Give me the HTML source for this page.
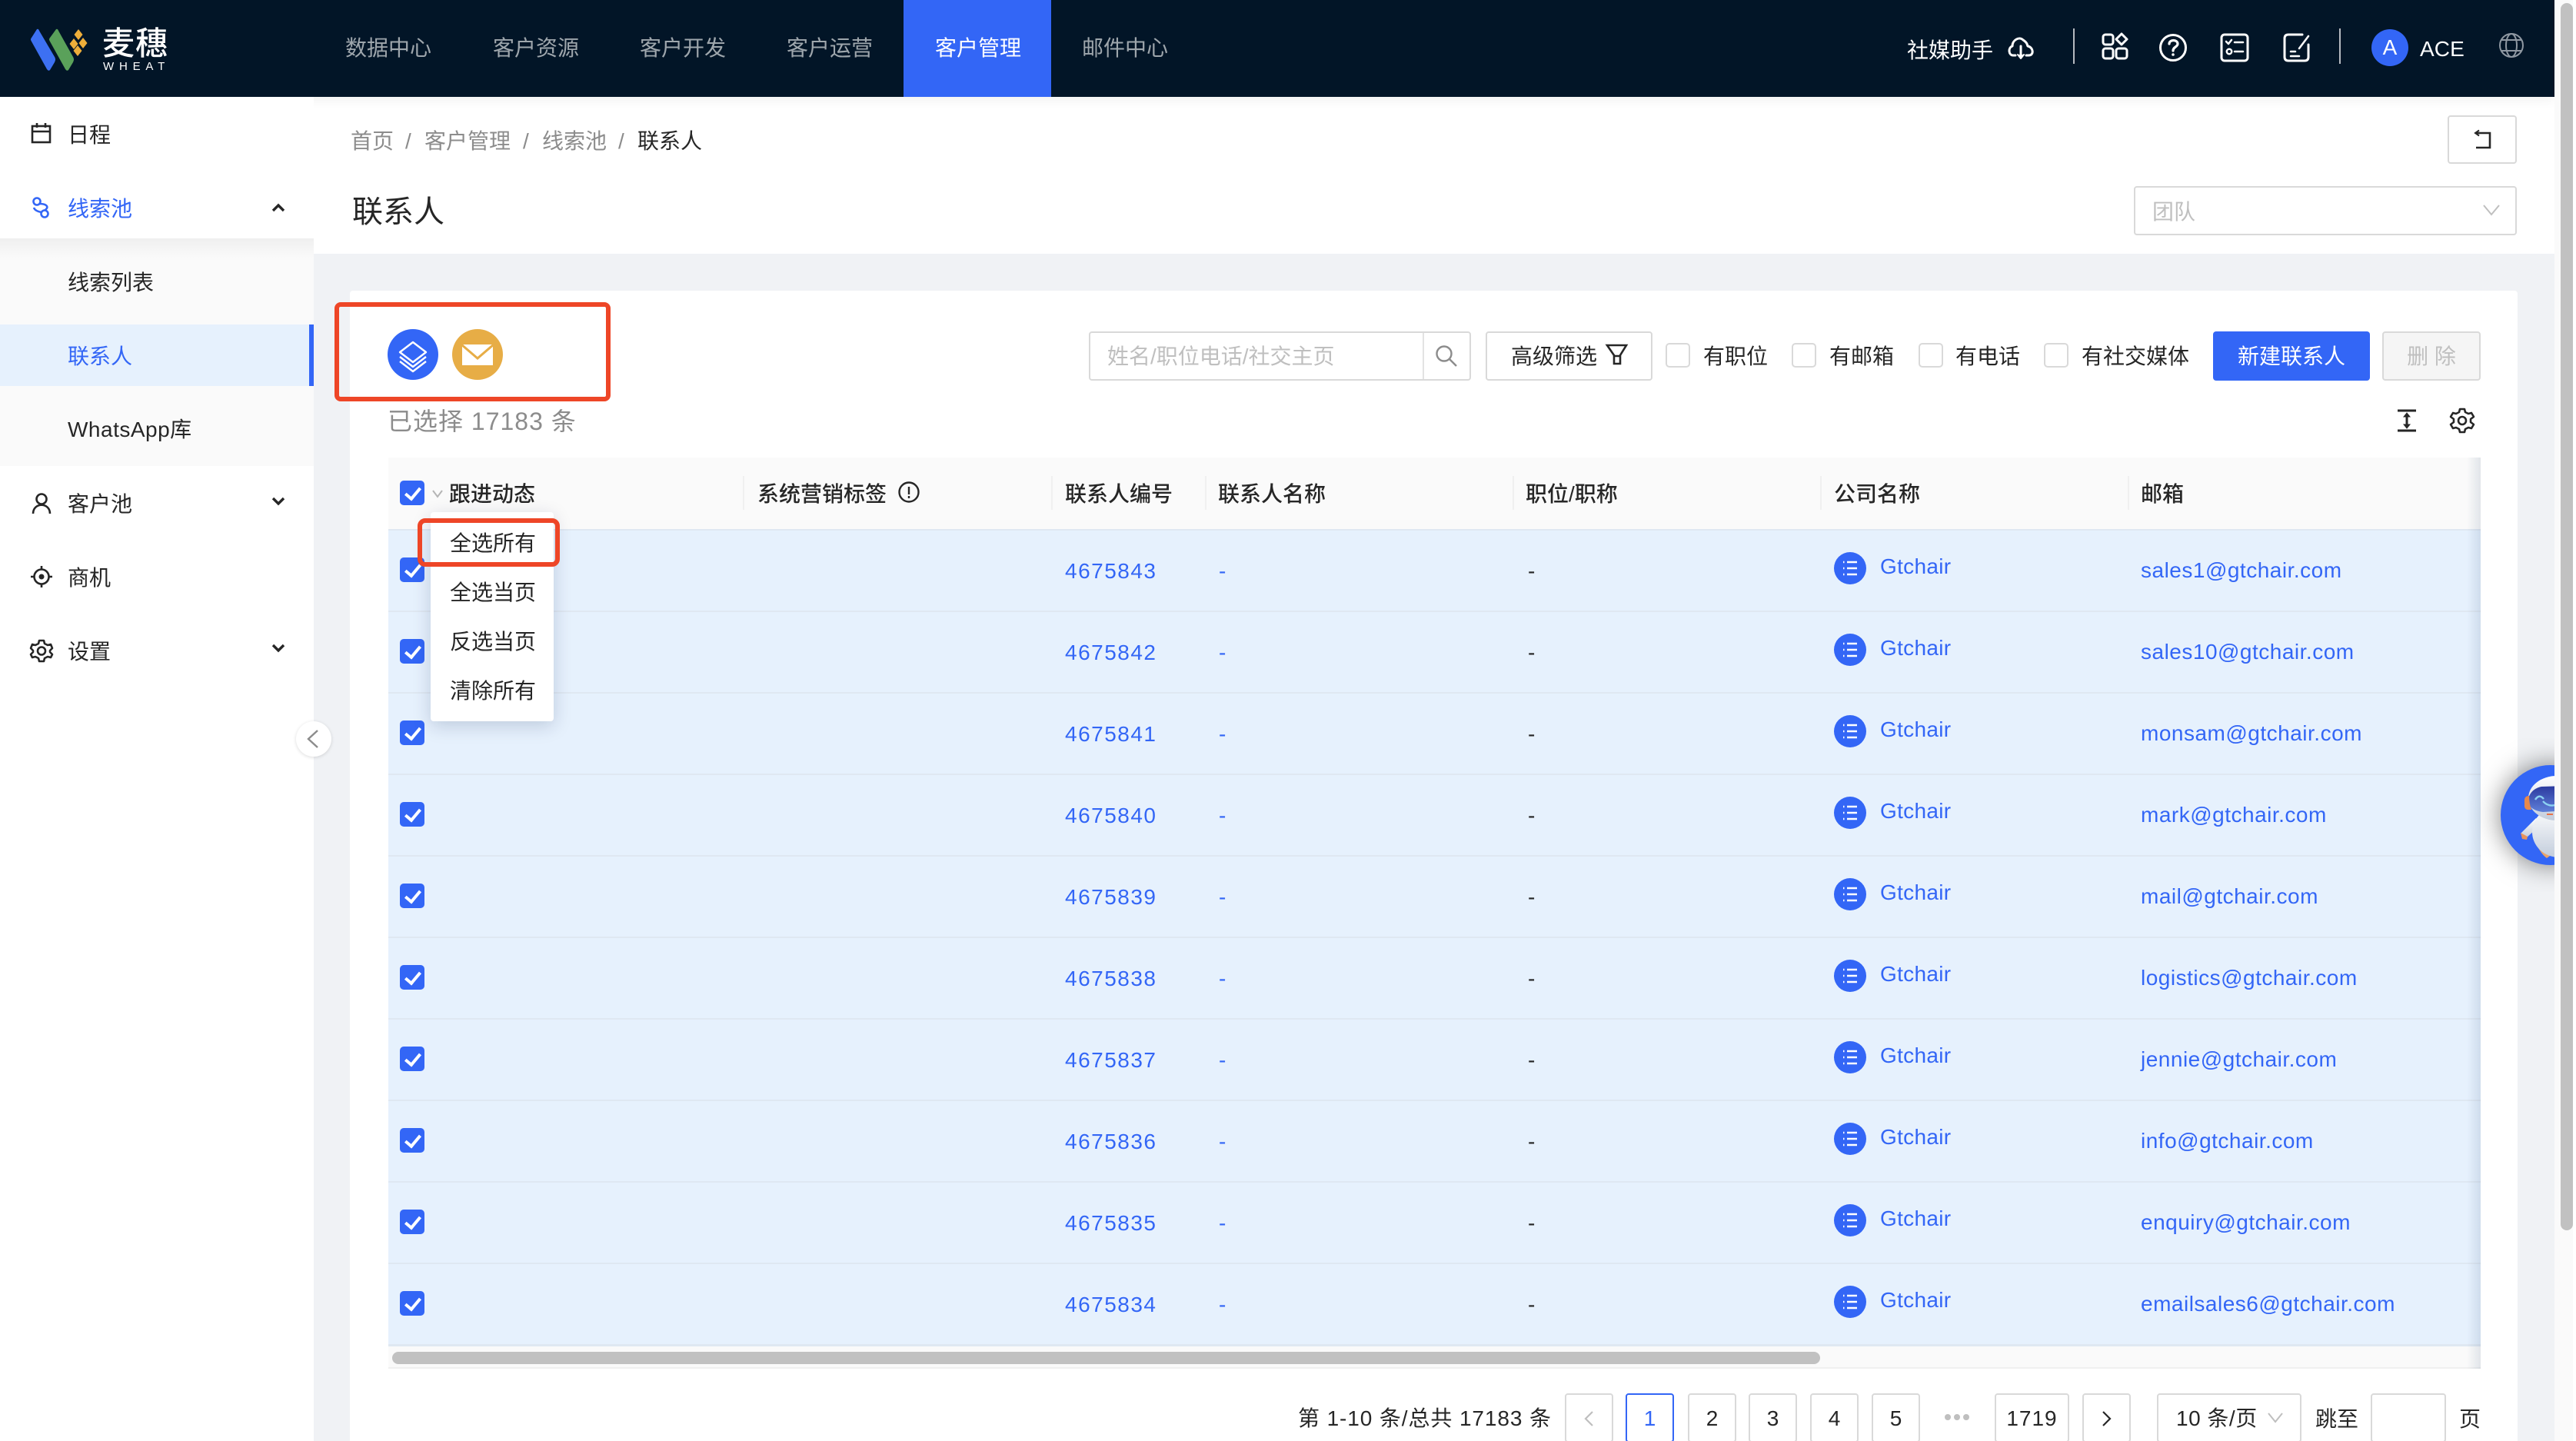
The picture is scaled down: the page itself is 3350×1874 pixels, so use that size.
<!DOCTYPE html>
<html lang="zh-CN"><head><meta charset="utf-8"><title>联系人</title>
<style>
html,body{margin:0;padding:0;width:3350px;height:1874px;overflow:hidden;background:#f0f2f5}
body{position:relative;font-family:"Liberation Sans","Noto Sans CJK SC",sans-serif;font-size:28px;color:#262626}
.a{position:absolute;box-sizing:border-box}
.t{position:absolute;white-space:nowrap;line-height:40px;height:40px;transform:translateY(2px)}
svg{position:absolute;overflow:visible}
.nav{color:rgba(255,255,255,.62);top:41px}
.g{color:#8c8c8c}
.b{color:#3366f6}
.cb{position:absolute;box-sizing:border-box;width:32px;height:32px;border-radius:5px;background:#3366f6}
.cb::after{content:"";position:absolute;left:11px;top:5px;width:8px;height:16px;border:solid #fff;border-width:0 4px 4px 0;transform:rotate(40deg)}
.ck{position:absolute;box-sizing:border-box;width:32px;height:32px;border-radius:5px;border:2px solid #d9d9d9;background:#fff;top:446px}
.th{top:621px;font-weight:500;color:#262626}
.sep{position:absolute;top:619px;width:2px;height:44px;background:#f0f0f0}
.row{position:absolute;left:505px;width:2721px;height:106px;background:linear-gradient(#dfe8f2 2px,#e6f1fd 2px);box-sizing:border-box}
.row .id{left:880px;top:33px;color:#3366f6;letter-spacing:1.5px}
.row .d1{left:1080px;top:33px;color:#3366f6}
.row .d2{left:1482px;top:33px;color:#262626}
.row .co{left:1940px;top:27px;color:#3366f6;letter-spacing:.3px}
.row .em{left:2279px;top:32px;color:#3366f6;letter-spacing:.5px}
.row .cb{left:15px;top:37px}
.row svg{left:1880px;top:30px}
.pg{position:absolute;box-sizing:border-box;top:1812px;height:64px;border:2px solid #d9d9d9;border-radius:4px;background:#fff;text-align:center;line-height:62px;font-size:28px}
.dd{left:585px}
</style></head><body>

<!-- top panel -->
<div class="a" style="left:408px;top:126px;width:2914px;height:204px;background:#fff"></div>
<!-- main card -->
<div class="a" style="left:455px;top:378px;width:2819px;height:1496px;background:#fff;border-radius:4px 4px 0 0"></div>

<!-- header -->
<div class="a" style="left:0;top:0;width:3322px;height:126px;background:#021527;box-shadow:0 4px 14px rgba(0,0,0,.06)"></div>
<svg style="left:0;top:0" width="240" height="126">
<path d="M48 38 Q50 37 51 40 L71 74 Q73 77 71 81 L65 91 Q63 93 61 90 L41 54 Q39 51 41 49Z" fill="#3d70f2"/>
<path d="M73 38 Q75 37 76 40 L95 74 Q97 77 95 81 L89 91 Q87 93 85 90 L65 54 Q63 51 65 49Z" fill="#5aa15a"/>
<path d="M102 38 L107.500 45 L102 52 L96.500 45Z M96 50 L101.500 57 L96 64 L90.500 57Z M108 49 L113.500 56 L108 63 L102.500 56Z M101 59 L106.500 66 L101 73 L95.500 66Z" fill="#eeae3a"/>
</svg>
<div class="t" style="left:133px;top:34px;font-size:42px;line-height:42px;height:42px;font-weight:500;color:#fff;letter-spacing:1px">麦穗</div>
<div class="t" style="left:134px;top:77px;font-size:15px;line-height:15px;height:15px;color:#fff;letter-spacing:6.8px">WHEAT</div>

<div class="t nav" style="left:449px">数据中心</div>
<div class="t nav" style="left:641px">客户资源</div>
<div class="t nav" style="left:832px">客户开发</div>
<div class="t nav" style="left:1023px">客户运营</div>
<div class="a" style="left:1175px;top:0;width:192px;height:126px;background:#3366f6"></div>
<div class="t nav" style="left:1216px;color:#fff">客户管理</div>
<div class="t nav" style="left:1407px">邮件中心</div>

<div class="t" style="left:2480px;top:44px;color:#fff">社媒助手</div>
<svg style="left:2600px;top:30px" width="420" height="60" fill="none" stroke="#fff" stroke-width="3" stroke-linecap="round" stroke-linejoin="round">
<path d="M21 42 H18 C12 42 11 32 17 30 C17 22 26 17 31 22 C37 26 36 28 37 30 C44 31 46 42 38 42 H35"/>
<path d="M28 30 V44"/><path d="M24 41 L28 46 L32 41" fill="#fff" stroke-width="2"/>
<rect x="135" y="15" width="13" height="13" rx="3"/><rect x="135" y="33" width="13" height="13" rx="3"/><rect x="152" y="33" width="14" height="13" rx="3"/>
<path d="M159 14 L166 21 L159 28 L152 21Z"/>
<circle cx="226" cy="32" r="16.5"/>
<path d="M221 27 C221 21 232 21 232 27 C232 31 226 31 226 36" stroke-width="3.2"/><circle cx="226" cy="41" r="1.3" fill="#fff" stroke-width="1"/>
<rect x="289" y="15" width="34" height="34" rx="4"/>
<path d="M295 24 L298 27 L302 22 M306 25 H317 M306 37 H317" stroke-width="2.5"/><circle cx="299" cy="37" r="3.2" stroke-width="2.5"/>
<path d="M394 15 H376 Q371 15 371 20 V44 Q371 49 376 49 H397 Q402 49 402 44 V28"/>
<path d="M402 17 L390 33 M379 37 H385 M379 43 H390" stroke-width="2.5"/>
</svg>
<div class="a" style="left:2696px;top:37px;width:2px;height:46px;background:#b5bac0"></div>
<div class="a" style="left:3042px;top:37px;width:2px;height:46px;background:#b5bac0"></div>
<div class="a" style="left:3084px;top:38px;width:48px;height:48px;border-radius:50%;background:#3366f6;color:#fff;text-align:center;line-height:48px;font-size:28px">A</div>
<div class="t" style="left:3147px;top:42px;color:#fff;letter-spacing:.1px">ACE</div>
<svg style="left:3249px;top:42px" width="34" height="34" fill="none" stroke="#8f98a2" stroke-width="2">
<circle cx="17" cy="17" r="15"/><ellipse cx="17" cy="17" rx="7" ry="15"/><path d="M4 10 H30 M4 24 H30"/>
</svg>

<!-- sidebar -->
<div class="a" style="left:0;top:126px;width:408px;height:1748px;background:#fff"></div>
<div class="a" style="left:0;top:310px;width:408px;height:296px;background:#fafafa"></div>
<div class="a" style="left:0;top:310px;width:408px;height:26px;background:linear-gradient(rgba(0,0,0,.045),rgba(0,0,0,0))"></div>
<div class="a" style="left:0;top:422px;width:408px;height:80px;background:#e6f1fd;border-right:6px solid #3366f6"></div>

<svg style="left:40px;top:158px" width="28" height="30" fill="none" stroke="#262626" stroke-width="2.6">
<rect x="2" y="6" width="23" height="21"/><path d="M2 13 H25 M8 2 V8 M19 2 V8"/>
</svg>
<div class="t" style="left:88px;top:154px">日程</div>
<svg style="left:40px;top:255px" width="28" height="30" fill="none" stroke="#3366f6" stroke-width="2.6">
<circle cx="8" cy="7" r="4.5"/><circle cx="18" cy="23" r="4.5"/><path d="M11 10 C22 10 24 15 18 18.5 M14 21 C8 20 5 18 4 15"/>
</svg>
<div class="t b" style="left:88px;top:250px">线索池</div>
<svg style="left:352px;top:263px" width="20" height="14" fill="none" stroke="#262626" stroke-width="3.4"><path d="M3 11 L10 4 L17 11"/></svg>
<div class="t" style="left:88px;top:346px">线索列表</div>
<div class="t b" style="left:88px;top:442px">联系人</div>
<div class="t" style="left:88px;top:537px;letter-spacing:.5px">WhatsApp库</div>
<svg style="left:40px;top:640px" width="28" height="30" fill="none" stroke="#262626" stroke-width="2.6">
<circle cx="14" cy="9" r="6.5"/><path d="M3 28 C3 13 25 13 25 28"/>
</svg>
<div class="t" style="left:88px;top:634px">客户池</div>
<svg style="left:352px;top:645px" width="20" height="14" fill="none" stroke="#262626" stroke-width="3.4"><path d="M3 3 L10 10 L17 3"/></svg>
<svg style="left:38px;top:736px" width="30" height="30" fill="none" stroke="#262626" stroke-width="2.6">
<circle cx="16" cy="14" r="9.5"/><circle cx="16" cy="14" r="3.5" fill="#262626" stroke="none"/><path d="M16 0 V5 M16 23 V28 M2 14 H7 M25 14 H30"/>
</svg>
<div class="t" style="left:88px;top:730px">商机</div>
<svg style="left:38px;top:830px" width="30" height="30" fill="none" stroke="#262626" stroke-width="2.6" stroke-linejoin="round">
<path d="M13 3 H19 L20 7 L24 9 L28 8 L30 13 L27 16 L27 18 L30 21 L28 25 L24 24 L20 26 L19 30 H13 L12 26 L8 24 L4 25 L2 21 L5 18 L5 16 L2 13 L4 8 L8 9 L12 7Z"/><circle cx="16" cy="16.500" r="5"/>
</svg>
<div class="t" style="left:88px;top:826px">设置</div>
<svg style="left:352px;top:836px" width="20" height="14" fill="none" stroke="#262626" stroke-width="3.4"><path d="M3 3 L10 10 L17 3"/></svg>

<div class="a" style="left:385px;top:938px;width:46px;height:46px;border-radius:50%;background:#fff;box-shadow:0 1px 5px rgba(0,0,0,.14)"></div>
<svg style="left:398px;top:949px" width="20" height="24" fill="none" stroke="#8c8c8c" stroke-width="2.4"><path d="M15 1 L3 12 L15 23"/></svg>

<!-- breadcrumb -->
<div class="t g" style="left:456px;top:162px">首页</div>
<div class="t" style="left:527px;top:162px;color:#8c8c8c">/</div>
<div class="t g" style="left:552px;top:162px">客户管理</div>
<div class="t" style="left:680px;top:162px;color:#8c8c8c">/</div>
<div class="t g" style="left:705px;top:162px">线索池</div>
<div class="t" style="left:804px;top:162px;color:#8c8c8c">/</div>
<div class="t" style="left:829px;top:162px">联系人</div>
<div class="t" style="left:458px;top:252px;font-size:40px;line-height:44px;height:44px">联系人</div>

<div class="a" style="left:3183px;top:150px;width:90px;height:63px;border:2px solid #d9d9d9;border-radius:4px;background:#fff"></div>
<svg style="left:3217px;top:168px" width="40" height="30" fill="none" stroke="#262626" stroke-width="2.6"><path d="M3 5 H21 V24 H3"/><path d="M7 1.500 L2 5 L7 8.500" stroke-width="2"/></svg>
<div class="a" style="left:2775px;top:242px;width:498px;height:64px;border:2px solid #d9d9d9;border-radius:4px;background:#fff"></div>
<div class="t" style="left:2799px;top:254px;color:#bfbfbf">团队</div>
<svg style="left:3228px;top:264px" width="24" height="20" fill="none" stroke="#bfbfbf" stroke-width="2"><path d="M2 3 L12 15 L22 3"/></svg>

<!-- red box -->
<div class="a" style="left:435px;top:393px;width:359px;height:129px;border:6px solid #ee4627;border-radius:8px"></div>
<div class="a" style="left:504px;top:428px;width:66px;height:66px;border-radius:50%;background:#3366f6"></div>
<svg style="left:504px;top:428px" width="66" height="66" fill="none" stroke="#fff" stroke-width="2.4" stroke-linejoin="round">
<path d="M33 17 L50 30 L33 43 L16 30Z"/><path d="M16 37 L33 50 L50 37 M16 43 L33 56 L50 43" transform="translate(0,-1)"/>
</svg>
<div class="a" style="left:588px;top:428px;width:66px;height:66px;border-radius:50%;background:#e7ad46"></div>
<svg style="left:588px;top:428px" width="66" height="66"><rect x="13" y="20" width="40" height="27" fill="#fff"/><path d="M12 20 L33 38 L54 20" fill="none" stroke="#e7ad46" stroke-width="3"/></svg>

<div class="t g" style="left:504px;top:526px;font-size:32px;letter-spacing:1px">已选择 17183 条</div>

<!-- toolbar -->
<div class="a" style="left:1416px;top:431px;width:497px;height:64px;border:2px solid #d9d9d9;border-radius:4px;background:#fff"></div>
<div class="a" style="left:1850px;top:433px;width:2px;height:60px;background:#e3e3e3"></div>
<div class="t" style="left:1440px;top:442px;color:#bfbfbf">姓名/职位电话/社交主页</div>
<svg style="left:1866px;top:448px" width="30" height="30" fill="none" stroke="#8c8c8c" stroke-width="2.4"><circle cx="12" cy="12" r="9.5"/><path d="M19 19 L28 28"/></svg>
<div class="a" style="left:1932px;top:431px;width:217px;height:64px;border:2px solid #d9d9d9;border-radius:4px;background:#fff"></div>
<div class="t" style="left:1965px;top:442px">高级筛选</div>
<svg style="left:2088px;top:447px" width="30" height="30" fill="none" stroke="#262626" stroke-width="2.6"><path d="M2 2 H27 L19 15 V26 H11 V15Z M11 16 H19"/></svg>
<div class="ck" style="left:2166px"></div><div class="t" style="left:2215px;top:442px">有职位</div>
<div class="ck" style="left:2330px"></div><div class="t" style="left:2379px;top:442px">有邮箱</div>
<div class="ck" style="left:2495px"></div><div class="t" style="left:2543px;top:442px">有电话</div>
<div class="ck" style="left:2658px"></div><div class="t" style="left:2707px;top:442px">有社交媒体</div>
<div class="a" style="left:2878px;top:431px;width:204px;height:64px;background:#3366f6;border-radius:4px;color:#fff;text-align:center;line-height:66px">新建联系人</div>
<div class="a" style="left:3098px;top:431px;width:128px;height:64px;background:#f5f5f5;border:2px solid #d9d9d9;border-radius:4px;color:#bfbfbf;text-align:center;line-height:62px">删 除</div>

<svg style="left:3117px;top:531px" width="26" height="32" fill="none" stroke="#262626" stroke-width="3"><path d="M1 3 H25 M1 29 H25 M13 8 V24"/><path d="M9 11 L13 6 L17 11 Z M9 21 L13 26 L17 21Z" fill="#262626" stroke-width="1"/></svg>
<svg style="left:3186px;top:531px" width="32" height="32" fill="none" stroke="#262626" stroke-width="2.6" stroke-linejoin="round">
<path d="M13 1 H19 L20 5 L24 7 L28 6 L31 11 L27 14 L27 18 L31 21 L28 26 L24 25 L20 27 L19 31 H13 L12 27 L8 25 L4 26 L1 21 L5 18 L5 14 L1 11 L4 6 L8 7 L12 5Z"/><circle cx="16" cy="16" r="5"/>
</svg>

<!-- table header -->
<div class="a" style="left:505px;top:595px;width:2721px;height:93px;background:#fafafa"></div>
<div class="cb" style="left:520px;top:625px"></div>
<svg style="left:561px;top:636px" width="16" height="12" fill="none" stroke="#b5b5b5" stroke-width="2"><path d="M2 2 L8 10 L14 2"/></svg>
<div class="t th" style="left:584px">跟进动态</div>
<div class="sep" style="left:966px"></div>
<div class="t th" style="left:985px">系统营销标签</div>
<svg style="left:1168px;top:626px" width="30" height="30" fill="none" stroke="#262626" stroke-width="2.4"><circle cx="14" cy="14" r="12.5"/><path d="M14 7 V17 M14 19 V22"/></svg>
<div class="sep" style="left:1367px"></div>
<div class="t th" style="left:1385px">联系人编号</div>
<div class="sep" style="left:1567px"></div>
<div class="t th" style="left:1584px">联系人名称</div>
<div class="sep" style="left:1967px"></div>
<div class="t th" style="left:1984px">职位/职称</div>
<div class="sep" style="left:2367px"></div>
<div class="t th" style="left:2385px">公司名称</div>
<div class="sep" style="left:2767px"></div>
<div class="t th" style="left:2784px">邮箱</div>

<!-- rows -->
<div class="row" style="top:688px"><div class="cb"></div><div class="t id">4675843</div><div class="t d1">-</div><div class="t d2">-</div>
<svg width="42" height="42"><circle cx="21" cy="21" r="21" fill="#3366f6"/><path d="M17 13 H30 M17 21 H30 M17 29 H30 M12 13 H13.500 M12 21 H13.500 M12 29 H13.500" stroke="#fff" stroke-width="2.600" fill="none"/></svg><div class="t co">Gtchair</div><div class="t em">sales1@gtchair.com</div></div>
<div class="row" style="top:794px"><div class="cb"></div><div class="t id">4675842</div><div class="t d1">-</div><div class="t d2">-</div>
<svg width="42" height="42"><circle cx="21" cy="21" r="21" fill="#3366f6"/><path d="M17 13 H30 M17 21 H30 M17 29 H30 M12 13 H13.500 M12 21 H13.500 M12 29 H13.500" stroke="#fff" stroke-width="2.600" fill="none"/></svg><div class="t co">Gtchair</div><div class="t em">sales10@gtchair.com</div></div>
<div class="row" style="top:900px"><div class="cb"></div><div class="t id">4675841</div><div class="t d1">-</div><div class="t d2">-</div>
<svg width="42" height="42"><circle cx="21" cy="21" r="21" fill="#3366f6"/><path d="M17 13 H30 M17 21 H30 M17 29 H30 M12 13 H13.500 M12 21 H13.500 M12 29 H13.500" stroke="#fff" stroke-width="2.600" fill="none"/></svg><div class="t co">Gtchair</div><div class="t em">monsam@gtchair.com</div></div>
<div class="row" style="top:1006px"><div class="cb"></div><div class="t id">4675840</div><div class="t d1">-</div><div class="t d2">-</div>
<svg width="42" height="42"><circle cx="21" cy="21" r="21" fill="#3366f6"/><path d="M17 13 H30 M17 21 H30 M17 29 H30 M12 13 H13.500 M12 21 H13.500 M12 29 H13.500" stroke="#fff" stroke-width="2.600" fill="none"/></svg><div class="t co">Gtchair</div><div class="t em">mark@gtchair.com</div></div>
<div class="row" style="top:1112px"><div class="cb"></div><div class="t id">4675839</div><div class="t d1">-</div><div class="t d2">-</div>
<svg width="42" height="42"><circle cx="21" cy="21" r="21" fill="#3366f6"/><path d="M17 13 H30 M17 21 H30 M17 29 H30 M12 13 H13.500 M12 21 H13.500 M12 29 H13.500" stroke="#fff" stroke-width="2.600" fill="none"/></svg><div class="t co">Gtchair</div><div class="t em">mail@gtchair.com</div></div>
<div class="row" style="top:1218px"><div class="cb"></div><div class="t id">4675838</div><div class="t d1">-</div><div class="t d2">-</div>
<svg width="42" height="42"><circle cx="21" cy="21" r="21" fill="#3366f6"/><path d="M17 13 H30 M17 21 H30 M17 29 H30 M12 13 H13.500 M12 21 H13.500 M12 29 H13.500" stroke="#fff" stroke-width="2.600" fill="none"/></svg><div class="t co">Gtchair</div><div class="t em">logistics@gtchair.com</div></div>
<div class="row" style="top:1324px"><div class="cb"></div><div class="t id">4675837</div><div class="t d1">-</div><div class="t d2">-</div>
<svg width="42" height="42"><circle cx="21" cy="21" r="21" fill="#3366f6"/><path d="M17 13 H30 M17 21 H30 M17 29 H30 M12 13 H13.500 M12 21 H13.500 M12 29 H13.500" stroke="#fff" stroke-width="2.600" fill="none"/></svg><div class="t co">Gtchair</div><div class="t em">jennie@gtchair.com</div></div>
<div class="row" style="top:1430px"><div class="cb"></div><div class="t id">4675836</div><div class="t d1">-</div><div class="t d2">-</div>
<svg width="42" height="42"><circle cx="21" cy="21" r="21" fill="#3366f6"/><path d="M17 13 H30 M17 21 H30 M17 29 H30 M12 13 H13.500 M12 21 H13.500 M12 29 H13.500" stroke="#fff" stroke-width="2.600" fill="none"/></svg><div class="t co">Gtchair</div><div class="t em">info@gtchair.com</div></div>
<div class="row" style="top:1536px"><div class="cb"></div><div class="t id">4675835</div><div class="t d1">-</div><div class="t d2">-</div>
<svg width="42" height="42"><circle cx="21" cy="21" r="21" fill="#3366f6"/><path d="M17 13 H30 M17 21 H30 M17 29 H30 M12 13 H13.500 M12 21 H13.500 M12 29 H13.500" stroke="#fff" stroke-width="2.600" fill="none"/></svg><div class="t co">Gtchair</div><div class="t em">enquiry@gtchair.com</div></div>
<div class="row" style="top:1642px"><div class="cb"></div><div class="t id">4675834</div><div class="t d1">-</div><div class="t d2">-</div>
<svg width="42" height="42"><circle cx="21" cy="21" r="21" fill="#3366f6"/><path d="M17 13 H30 M17 21 H30 M17 29 H30 M12 13 H13.500 M12 21 H13.500 M12 29 H13.500" stroke="#fff" stroke-width="2.600" fill="none"/></svg><div class="t co">Gtchair</div><div class="t em">emailsales6@gtchair.com</div></div>

<!-- table scrollbar -->
<div class="a" style="left:505px;top:1748px;width:2721px;height:32px;background:#fafafa;border-top:3px solid #dfe8f2;border-bottom:2px solid #f0f0f0"></div>
<div class="a" style="left:510px;top:1758px;width:1857px;height:16px;background:#c1c1c1;border-radius:8px"></div>
<!-- right fixed shadow -->
<div class="a" style="left:3208px;top:595px;width:18px;height:1185px;background:linear-gradient(90deg,rgba(0,40,90,0),rgba(0,40,90,.1))"></div>

<!-- dropdown -->
<div class="a" style="left:560px;top:666px;width:160px;height:272px;background:#fff;border-radius:4px;box-shadow:0 6px 24px rgba(0,30,70,.18)"></div>
<div class="t dd" style="top:685px">全选所有</div>
<div class="t dd" style="top:749px">全选当页</div>
<div class="t dd" style="top:813px">反选当页</div>
<div class="t dd" style="top:877px">清除所有</div>
<div class="a" style="left:543px;top:674px;width:185px;height:63px;border:6px solid #ee4627;border-radius:10px"></div>

<!-- pagination -->
<div class="t" style="left:1688px;top:1823px;letter-spacing:.9px">第 1-10 条/总共 17183 条</div>
<div class="pg" style="left:2035px;width:63px"></div>
<svg style="left:2058px;top:1834px" width="16" height="22" fill="none" stroke="#bfbfbf" stroke-width="2.2"><path d="M13 2 L4 11 L13 20"/></svg>
<div class="pg" style="left:2114px;width:63px;border-color:#3366f6;color:#3366f6">1</div>
<div class="pg" style="left:2195px;width:63px">2</div>
<div class="pg" style="left:2274px;width:63px">3</div>
<div class="pg" style="left:2354px;width:63px">4</div>
<div class="pg" style="left:2434px;width:63px">5</div>
<div class="a" style="left:2529px;top:1839px;width:8px;height:8px;border-radius:50%;background:#bfbfbf"></div>
<div class="a" style="left:2541px;top:1839px;width:8px;height:8px;border-radius:50%;background:#bfbfbf"></div>
<div class="a" style="left:2553px;top:1839px;width:8px;height:8px;border-radius:50%;background:#bfbfbf"></div>
<div class="pg" style="left:2594px;width:97px;letter-spacing:1px">1719</div>
<div class="pg" style="left:2708px;width:63px"></div>
<svg style="left:2732px;top:1834px" width="16" height="22" fill="none" stroke="#262626" stroke-width="2.2"><path d="M3 2 L12 11 L3 20"/></svg>
<div class="pg" style="left:2805px;width:188px"></div>
<div class="t" style="left:2830px;top:1823px;letter-spacing:.5px">10 条/页</div>
<svg style="left:2948px;top:1836px" width="22" height="16" fill="none" stroke="#bfbfbf" stroke-width="2"><path d="M2 2 L11 13 L20 2"/></svg>
<div class="t" style="left:3011px;top:1824px">跳至</div>
<div class="pg" style="left:3083px;width:98px"></div>
<div class="t" style="left:3198px;top:1824px">页</div>

<!-- robot -->
<div class="a" style="left:3170px;top:960px;width:152px;height:200px;overflow:hidden">
<div class="a" style="left:82px;top:35px;width:130px;height:130px;border-radius:50%;background:#3366f6;box-shadow:0 0 34px rgba(0,0,0,.5)"></div>
<svg style="left:10px;top:10px" width="142" height="190">
<defs>
<linearGradient id="rb" x1="0" y1="0" x2="0" y2="1"><stop offset="0" stop-color="#fff"/><stop offset="1" stop-color="#c3cddc"/></linearGradient>
<linearGradient id="vs" x1="0" y1="0" x2="0" y2="1"><stop offset="0" stop-color="#2b3a9e"/><stop offset="1" stop-color="#5f7fd9"/></linearGradient>
</defs>
<path d="M118 94 L127 100 L106 119 L98 114Z" fill="url(#rb)"/>
<path d="M98 113 L107 118 L106 122 L100 121Z" fill="#e8935a"/>
<path d="M120 131 H143 V138 L132 146 Q126 142 120 131Z" fill="#eba56a"/>
<ellipse cx="148" cy="112" rx="35" ry="33" fill="url(#rb)"/>
<ellipse cx="145" cy="68" rx="37" ry="29" fill="url(#rb)"/>
<path d="M107 72 Q110 56 125 53 L160 52 V84 L127 86 Q110 84 107 72Z" fill="url(#vs)"/>
<path d="M109 65 Q103 65 103 71 V79 Q104 84 110 83 L112 83 Q109 75 109 65Z" fill="#e8894a"/>
<path d="M117 70 Q122 62 128 69 M127 72 Q136 82 150 74" fill="none" stroke="#8cd3f2" stroke-width="2.400"/>
<path d="M132 89 H140" stroke="#e8734a" stroke-width="2"/>
</svg>
</div>

<!-- page scrollbar -->
<div class="a" style="left:3322px;top:0;width:28px;height:1874px;background:#fafafa"></div>
<div class="a" style="left:3346px;top:0;width:4px;height:1874px;background:#fff"></div>
<div class="a" style="left:3330px;top:4px;width:16px;height:1596px;background:#c1c1c1;border-radius:8px"></div>

</body></html>
